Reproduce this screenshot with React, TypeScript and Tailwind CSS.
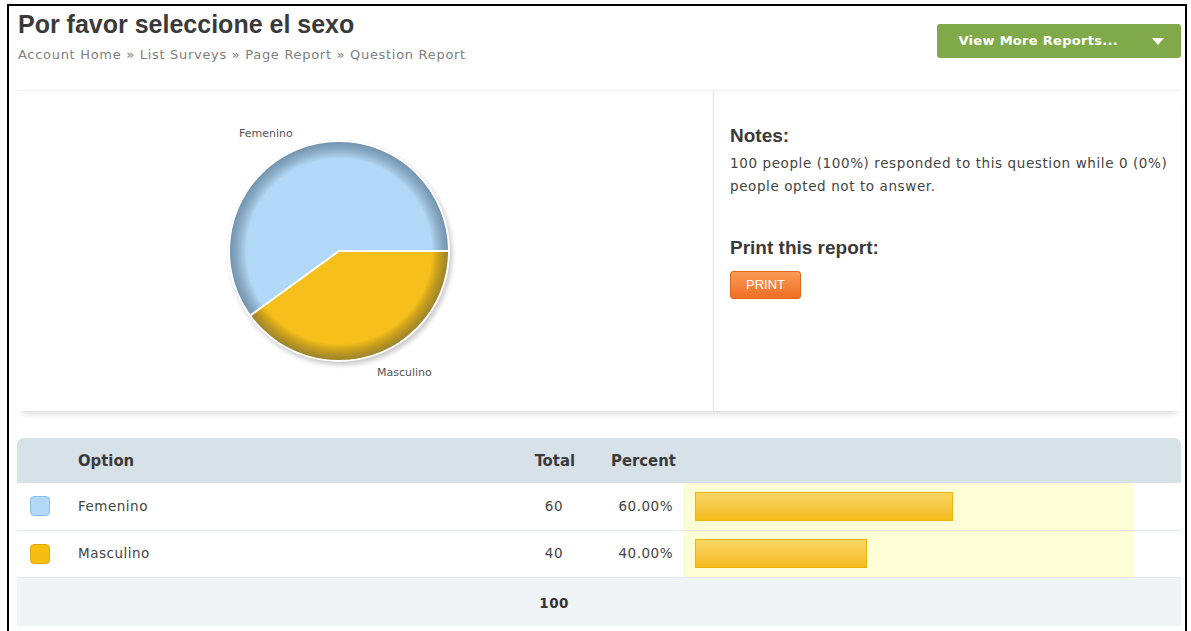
import React from "react";

type Row = { label: string; total: number; swatch: string; border: string };

const ROWS: Row[] = [
  { label: "Femenino", total: 60, swatch: "bg-[#b3d9f7]", border: "border-[#8cc0ea]" },
  { label: "Masculino", total: 40, swatch: "bg-[#f6bd12]", border: "border-[#e3a90a]" },
];

const GRAND_TOTAL = ROWS.reduce((sum, r) => sum + r.total, 0);
const BAR_MAX = 430;

const verdana = "font-['DejaVu_Sans',Verdana,sans-serif]";
const condensed = "font-['DejaVu_Sans_Condensed','DejaVu_Sans',sans-serif]";
const arial = "font-['Liberation_Sans',Arial,sans-serif]";

function PieChart() {
  // 40% slice starts at 3 o'clock and runs clockwise
  const cx = 139;
  const cy = 136;
  const r = 109;
  const a = (0.4 * 360 * Math.PI) / 180;
  const ex = cx + r * Math.cos(a);
  const ey = cy + r * Math.sin(a);

  return (
    <svg width="290" height="275" viewBox="0 0 290 275" className="block">
      <defs>
        <radialGradient id="rim" cx="50%" cy="50%" r="50%">
          <stop offset="85%" stopColor="#000" stopOpacity="0" />
          <stop offset="100%" stopColor="#1d3550" stopOpacity="0.42" />
        </radialGradient>
        <filter id="drop" x="-20%" y="-20%" width="140%" height="140%">
          <feGaussianBlur stdDeviation="2.5" />
        </filter>
      </defs>
      <circle cx={cx + 2} cy={cy + 3} r={r + 2} fill="#000" opacity="0.22" filter="url(#drop)" />
      <circle cx={cx} cy={cy} r={r + 2} fill="#fff" />
      <path d={`M${cx} ${cy} L${cx + r} ${cy} A${r} ${r} 0 0 1 ${ex} ${ey} Z`} fill="#f5bf1c" />
      <path d={`M${cx} ${cy} L${ex} ${ey} A${r} ${r} 0 1 1 ${cx + r} ${cy} Z`} fill="#b1d8f6" />
      <circle cx={cx} cy={cy} r={r} fill="url(#rim)" />
      <path
        d={`M${cx + r} ${cy} L${cx} ${cy} L${ex} ${ey}`}
        fill="none"
        stroke="#fff"
        strokeWidth="2"
      />
      <text x="39" y="22" fontSize="11" fill="#555" fontFamily="DejaVu Sans, Verdana, sans-serif">
        Femenino
      </text>
      <text x="177" y="261" fontSize="11" fill="#555" fontFamily="DejaVu Sans, Verdana, sans-serif">
        Masculino
      </text>
    </svg>
  );
}

export default function App() {
  return (
    <div className="min-h-screen bg-white">
      <div className="ml-[7px] mt-[4px] h-[627px] w-[1180px] overflow-hidden border-2 border-b-0 border-black pl-[8px] pr-[4px]">
        <header className="flex items-start justify-between">
          <div className="pl-[1px] pt-[4px]">
            <h1 className={`${arial} text-[25px] font-bold leading-[28px] text-[#3a3a3a]`}>
              Por favor seleccione el sexo
            </h1>
            <p className={`${verdana} mt-[9px] text-[13px] leading-[16px] tracking-[0.7px] text-[#808080]`}>
              Account Home » List Surveys » Page Report » Question Report
            </p>
          </div>
          <button
            type="button"
            className={`${verdana} mt-[18px] flex h-[34px] w-[244px] items-center justify-end gap-[34px] rounded-[3px] bg-[#80aa4a] pr-[17px] text-[13px] font-bold tracking-[0.3px] text-white`}
          >
            <span>View More Reports...</span>
            <span className="h-0 w-0 border-x-[6px] border-t-[7px] border-x-transparent border-t-white" />
          </button>
        </header>

        <section className="mt-[27px] flex h-[321px] border-t border-[#f2f2f2] shadow-[0_7px_7px_-5px_rgba(0,0,0,0.18)]">
          <div className="w-[697px] border-r border-[#e4e4e4] pl-[183px] pt-[24px]">
            <PieChart />
          </div>
          <div className="flex-1 pl-[16px] pt-[33px]">
            <h2 className={`${arial} text-[19px] font-bold leading-[24px] text-[#3a3a3a]`}>Notes:</h2>
            <p className={`${verdana} mt-[4px] text-[13.5px] leading-[23px] tracking-[0.6px] text-[#444]`}>
              100 people (100%) responded to this question while 0 (0%) people opted not to answer.
            </p>
            <h2 className={`${arial} mt-[38px] text-[19px] font-bold leading-[24px] text-[#3a3a3a]`}>
              Print this report:
            </h2>
            <button
              type="button"
              className={`${arial} mt-[11px] h-[28px] w-[71px] rounded-[3px] border border-[#e0661c] bg-gradient-to-b from-[#fa9a55] to-[#f06f22] text-[13px] text-white`}
            >
              PRINT
            </button>
          </div>
        </section>

        <table className="mt-[27px] w-full border-collapse">
          <thead>
            <tr className={`${condensed} h-[45px] bg-[#d7e1e8] text-[16.5px] font-bold text-[#3a3a3a]`}>
              <th className="w-[61px] rounded-tl-[7px] pt-[2px]" />
              <th className="pt-[2px] text-left">Option</th>
              <th className="w-[120px] pt-[2px] text-right">Total</th>
              <th className="w-[108px] pl-[36px] pt-[2px] text-left">Percent</th>
              <th className="w-[450px]" />
              <th className="w-[48px] rounded-tr-[7px]" />
            </tr>
          </thead>
          <tbody className={`${verdana} text-[13.5px] tracking-[0.5px] text-[#444]`}>
            {ROWS.map((row) => (
              <tr key={row.label} className="h-[47px] border-b border-[#e3e9ee]">
                <td className="pl-[13px]">
                  <div className={`h-[20px] w-[20px] rounded-[4px] border ${row.border} ${row.swatch}`} />
                </td>
                <td>{row.label}</td>
                <td className="pr-[12px] text-right">{row.total}</td>
                <td className="pr-[10px] text-right">{((row.total / GRAND_TOTAL) * 100).toFixed(2)}%</td>
                <td className="bg-[#fdfed6] pl-[12px]">
                  <div
                    className="h-[29px] border border-[#efb409] bg-gradient-to-b from-[#f9d662] to-[#f5bb14]"
                    style={{ width: Math.round((row.total / GRAND_TOTAL) * BAR_MAX) }}
                  />
                </td>
                <td />
              </tr>
            ))}
            <tr className="h-[49px] bg-[#f0f4f7]">
              <td />
              <td />
              <td className="pr-[6px] pt-[2px] text-right font-bold text-[#333]">{GRAND_TOTAL}</td>
              <td />
              <td />
              <td />
            </tr>
          </tbody>
        </table>
      </div>
    </div>
  );
}
